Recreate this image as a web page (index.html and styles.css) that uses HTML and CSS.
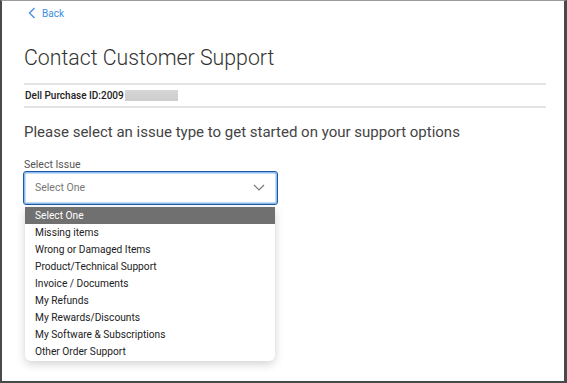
FILE: index.html
```html
<!DOCTYPE html>
<html lang="en">
<head>
    <meta charset="UTF-8">
    <title>Contact Customer Support</title>
    <link rel="stylesheet" href="styles.css">
</head>
<body>
    <div class="frame">
        <a class="back" href="#">
            <svg width="8" height="12" viewBox="0 0 8 12"><path d="M6.5 1 L1.5 6 L6.5 11" fill="none" stroke="#4a90e2" stroke-width="1.4"/></svg>
            <span>Back</span>
        </a>
        <h1 class="title">Contact Customer Support</h1>
        <div class="purchase">Dell Purchase ID:2009<span class="redacted"></span></div>
        <h2 class="prompt">Please select an issue type to get started on your support options</h2>
        <div class="label">Select Issue</div>
        <div class="select">
            <span>Select One</span>
            <svg width="12" height="7" viewBox="0 0 12 7"><path d="M1 1 L6 6 L11 1" fill="none" stroke="#777" stroke-width="1.2"/></svg>
        </div>
        <ul class="options">
            <li class="active">Select One</li>
            <li>Missing items</li>
            <li>Wrong or Damaged Items</li>
            <li>Product/Technical Support</li>
            <li>Invoice / Documents</li>
            <li>My Refunds</li>
            <li>My Rewards/Discounts</li>
            <li>My Software &amp; Subscriptions</li>
            <li>Other Order Support</li>
        </ul>
    </div>
</body>
</html>
```

FILE: styles.css
```css
html, body {
    margin: 0;
    padding: 0;
    height: 100%;
}
body {
    font-family: Roboto, "Liberation Sans", sans-serif;
    background: #ffffff;
    color: #333;
}
.frame {
    box-sizing: border-box;
    height: 383px;
    border-top: 1px solid #9a9a9a;
    border-left: 2px solid #4a4a4a;
    border-right: 3px solid #4a4a4a;
    border-bottom: 2px solid #4a4a4a;
    padding: 0 18px 0 22px;
}
.back {
    display: flex;
    align-items: center;
    gap: 6px;
    margin: 6px 0 0 4px;
    color: #3a8ee0;
    text-decoration: none;
    font-size: 10px;
    height: 12px;
}
.title {
    font-size: 21.3px;
    font-weight: 300;
    color: #333;
    margin: 26px 0 0 0;
    line-height: 26px;
    padding-bottom: 12px;
    border-bottom: 2px solid #e4e4e4;
}
.purchase {
    font-size: 10px;
    font-weight: 500;
    color: #222;
    display: flex;
    align-items: center;
    height: 20px;
    padding: 0 0 1px 1px;
    border-bottom: 2px solid #e4e4e4;
}
.redacted {
    display: inline-block;
    width: 53px;
    height: 11px;
    background: linear-gradient(#d6d6d6, #cdcdcd);
    margin-left: 1px;
}
.prompt {
    font-size: 15px;
    font-weight: 400;
    color: #444;
    margin: 14px 0 0 0;
    line-height: 20px;
}
.label {
    font-size: 10.5px;
    color: #555;
    margin-top: 16px;
    line-height: 13px;
}
.select {
    box-sizing: border-box;
    width: 255px;
    height: 34px;
    margin-top: 0;
    margin-left: -1px;
    border: 1px solid #1e5aa8;
    border-radius: 3px;
    box-shadow: inset 0 0 0 1.5px #8cbcee;
    display: flex;
    align-items: center;
    justify-content: space-between;
    padding: 0 12px 1px 11px;
    font-size: 10.5px;
    color: #777;
}
.options {
    list-style: none;
    margin: 2px 0 0 1px;
    padding: 0 0 1px 0;
    width: 250px;
    background: #fff;
    border-radius: 0 0 6px 6px;
    box-shadow: 0 3px 10px rgba(0, 0, 0, 0.18);
    font-size: 10.2px;
    color: #222;
}
.options li {
    height: 17px;
    line-height: 17px;
    padding-left: 10px;
}
.options li.active {
    background: #707070;
    color: #fff;
}
```
